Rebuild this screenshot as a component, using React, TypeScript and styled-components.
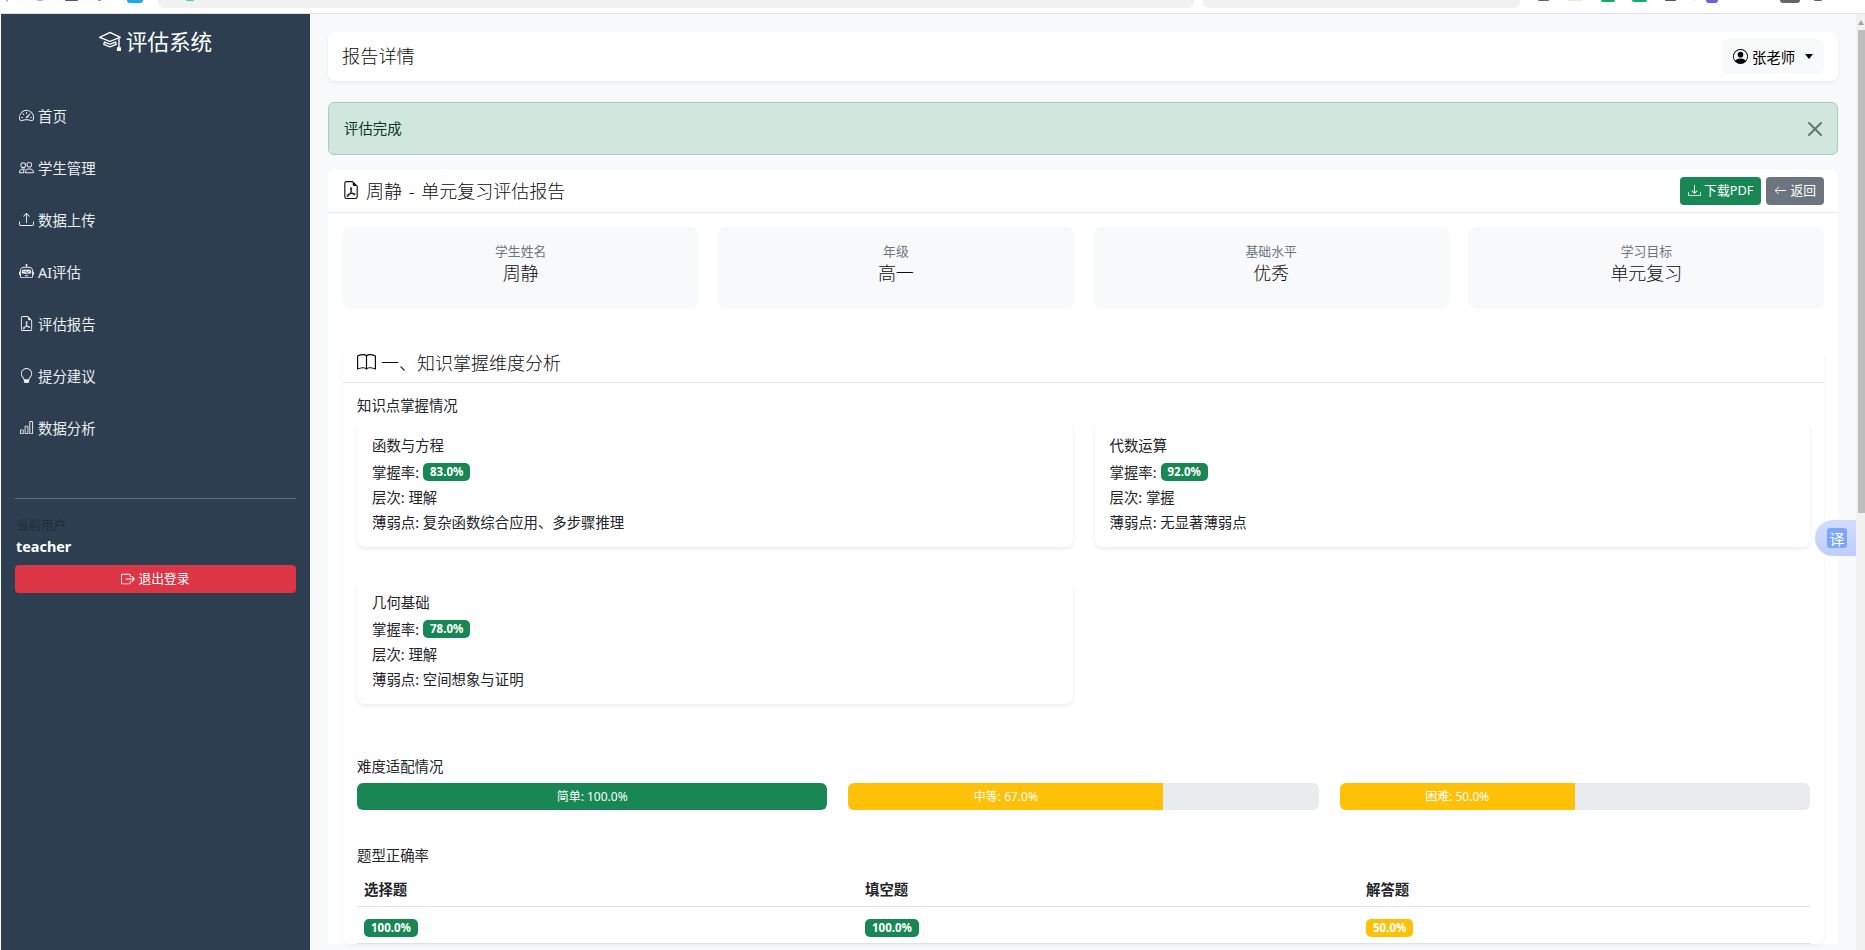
import React from "react";
import styled, { createGlobalStyle } from "styled-components";
import {
  BsArrowLeft,
  BsBarChart,
  BsBook,
  BsBoxArrowRight,
  BsDownload,
  BsFileEarmarkPdf,
  BsLightbulb,
  BsMortarboard,
  BsPeople,
  BsPersonCircle,
  BsRobot,
  BsSpeedometer2,
  BsUpload,
  BsX,
} from "react-icons/bs";

const GlobalStyle = createGlobalStyle`
  html, body {
    margin: 0;
    height: 950px;
    overflow: hidden;
    background: #fff;
    font-family: "Noto Sans", "Noto Sans CJK SC", sans-serif;
    font-size: 14.4px;
    color: #212529;
  }
  * { box-sizing: border-box; }
`;

const navItems = [
  { label: "首页", icon: <BsSpeedometer2 /> },
  { label: "学生管理", icon: <BsPeople /> },
  { label: "数据上传", icon: <BsUpload /> },
  { label: "AI评估", icon: <BsRobot /> },
  { label: "评估报告", icon: <BsFileEarmarkPdf /> },
  { label: "提分建议", icon: <BsLightbulb /> },
  { label: "数据分析", icon: <BsBarChart /> },
];

const infoItems = [
  { label: "学生姓名", value: "周静" },
  { label: "年级", value: "高一" },
  { label: "基础水平", value: "优秀" },
  { label: "学习目标", value: "单元复习" },
];

const knowledge = [
  { name: "函数与方程", rate: "83.0%", level: "理解", weak: "复杂函数综合应用、多步骤推理" },
  { name: "代数运算", rate: "92.0%", level: "掌握", weak: "无显著薄弱点" },
  { name: "几何基础", rate: "78.0%", level: "理解", weak: "空间想象与证明" },
];

const difficulty = [
  { label: "简单: 100.0%", pct: 100, color: "#198754" },
  { label: "中等: 67.0%", pct: 67, color: "#ffc107" },
  { label: "困难: 50.0%", pct: 50, color: "#ffc107" },
];

const questionTypes = [
  { name: "选择题", rate: "100.0%", color: "#198754" },
  { name: "填空题", rate: "100.0%", color: "#198754" },
  { name: "解答题", rate: "50.0%", color: "#ffc107" },
];

const chromeLeft = [
  { ml: 6, w: 2, h: 2, c: "#bdbdbd" },
  { ml: 29, w: 6, h: 1, c: "#b5b5b5" },
  { ml: 22, w: 13, h: 1, c: "#555" },
  { ml: 20, w: 3, h: 1, c: "#888" },
  { ml: 26, w: 16, h: 3, c: "#1ea7f0" },
];

const chromeRight = [
  { ml: 18, w: 11, h: 1, c: "#666" },
  { ml: 19, w: 14, h: 1, c: "#fbe3cd" },
  { ml: 19, w: 14, h: 2, c: "#10b064" },
  { ml: 17, w: 15, h: 2, c: "#10b064" },
  { ml: 18, w: 11, h: 1, c: "#555" },
  { ml: 17, w: 1, h: 1, c: "#ccc" },
  { ml: 12, w: 12, h: 3, c: "#6d5cf0" },
  { ml: 62, w: 20, h: 3, c: "#666" },
  { ml: 14, w: 8, h: 1, c: "#666" },
];

export default function App() {
  return (
    <Page>
      <GlobalStyle />
      <TopStrip>
        {chromeLeft.map((b, i) => (
          <ChromeBit key={i} $ml={b.ml} $w={b.w} $h={b.h} $c={b.c} />
        ))}
        <AddressBar $ml={15} $w={1036}>
          <ChromeBit $ml={28} $w={8} $h={1} $c="#3ddc84" />
        </AddressBar>
        <AddressBar $ml={9} $w={317} />
        {chromeRight.map((b, i) => (
          <ChromeBit key={i} $ml={b.ml} $w={b.w} $h={b.h} $c={b.c} />
        ))}
      </TopStrip>
      <Body>
        <Sidebar>
          <Brand>
            <BsMortarboard />
            评估系统
          </Brand>
          <Nav>
            {navItems.map((item) => (
              <NavItem key={item.label}>
                {item.icon}
                {item.label}
              </NavItem>
            ))}
          </Nav>
          <SideDivider />
          <UserLabel>当前用户</UserLabel>
          <UserName>teacher</UserName>
          <LogoutButton>
            <BsBoxArrowRight />
            <span>退出登录</span>
          </LogoutButton>
        </Sidebar>
        <Main>
          <HeaderCard>
            <PageTitle>报告详情</PageTitle>
            <UserButton>
              <BsPersonCircle />
              张老师
              <Caret />
            </UserButton>
          </HeaderCard>
          <Alert>
            <span>评估完成</span>
            <CloseButton>
              <BsX />
            </CloseButton>
          </Alert>
          <ReportCard>
            <ReportHeader>
              <ReportTitle>
                <BsFileEarmarkPdf />
                周静 - 单元复习评估报告
              </ReportTitle>
              <HeaderActions>
                <ActionButton $bg="#198754">
                  <BsDownload />
                  <span>下载PDF</span>
                </ActionButton>
                <ActionButton $bg="#6c757d">
                  <BsArrowLeft />
                  <span>返回</span>
                </ActionButton>
              </HeaderActions>
            </ReportHeader>
            <ReportBody>
              <InfoGrid>
                {infoItems.map((info) => (
                  <InfoCard key={info.label}>
                    <InfoLabel>{info.label}</InfoLabel>
                    <InfoValue>{info.value}</InfoValue>
                  </InfoCard>
                ))}
              </InfoGrid>
              <Section>
                <SectionHeader>
                  <BsBook />
                  一、知识掌握维度分析
                </SectionHeader>
                <SectionBody>
                  <SubTitle>知识点掌握情况</SubTitle>
                  <KnowledgeGrid>
                    {knowledge.map((k) => (
                      <KnowledgeCard key={k.name}>
                        <KnowledgeRow>{k.name}</KnowledgeRow>
                        <KnowledgeRow>
                          掌握率:<Badge $bg="#198754">{k.rate}</Badge>
                        </KnowledgeRow>
                        <KnowledgeRow>层次: {k.level}</KnowledgeRow>
                        <KnowledgeRow>薄弱点: {k.weak}</KnowledgeRow>
                      </KnowledgeCard>
                    ))}
                  </KnowledgeGrid>
                  <SubTitle>难度适配情况</SubTitle>
                  <ProgressGrid>
                    {difficulty.map((d) => (
                      <Progress key={d.label}>
                        <ProgressFill $bg={d.color} style={{ width: `${d.pct}%` }}>
                          {d.label}
                        </ProgressFill>
                      </Progress>
                    ))}
                  </ProgressGrid>
                  <SubTitle>题型正确率</SubTitle>
                  <RateTable>
                    <thead>
                      <tr>
                        {questionTypes.map((q) => (
                          <RateHead key={q.name}>{q.name}</RateHead>
                        ))}
                      </tr>
                    </thead>
                    <tbody>
                      <tr>
                        {questionTypes.map((q) => (
                          <RateCell key={q.name}>
                            <Badge $bg={q.color}>{q.rate}</Badge>
                          </RateCell>
                        ))}
                      </tr>
                    </tbody>
                  </RateTable>
                </SectionBody>
              </Section>
            </ReportBody>
          </ReportCard>
        </Main>
        <Scrollbar>
          <ScrollArrow />
          <ScrollThumb />
        </Scrollbar>
        <TranslateTab>
          <TranslateIcon>译</TranslateIcon>
        </TranslateTab>
      </Body>
    </Page>
  );
}

const Page = styled.div`
  width: 1865px;
  height: 950px;
  display: flex;
  flex-direction: column;
  overflow: hidden;
`;

const TopStrip = styled.div`
  height: 14px;
  flex: none;
  display: flex;
  align-items: flex-start;
  background: #fff;
  border-bottom: 1px solid #e2e2e2;
`;

const ChromeBit = styled.span<{ $ml: number; $w: number; $h: number; $c: string }>`
  flex: none;
  margin-left: ${(p) => p.$ml}px;
  width: ${(p) => p.$w}px;
  height: ${(p) => p.$h}px;
  background: ${(p) => p.$c};
  border-radius: 0 0 4px 4px;
`;

const AddressBar = styled.div<{ $ml: number; $w: number }>`
  flex: none;
  display: flex;
  margin-left: ${(p) => p.$ml}px;
  width: ${(p) => p.$w}px;
  height: 8px;
  background: #f1f1f1;
  border-radius: 0 0 6px 6px;
`;

const Body = styled.div`
  position: relative;
  flex: 1;
  display: flex;
  min-height: 0;
  padding-left: 1px;
`;

const Sidebar = styled.aside`
  width: 309px;
  flex: none;
  background: #2c3e50;
  padding: 11px 14px 0 14px;
  color: #ecf0f1;
`;

const Brand = styled.div`
  display: flex;
  align-items: center;
  justify-content: center;
  gap: 5px;
  height: 30px;
  font-size: 21.6px;
  color: #fff;

  svg {
    width: 22px;
    height: 22px;
  }
`;

const Nav = styled.nav`
  margin-top: 34px;
  display: flex;
  flex-direction: column;
`;

const NavItem = styled.div`
  height: 52px;
  display: flex;
  align-items: center;
  gap: 4px;
  padding-left: 4px;
  font-size: 14.4px;
  color: #ecf0f1;

  svg {
    width: 15px;
    height: 15px;
  }
`;

const SideDivider = styled.div`
  margin-top: 45px;
  height: 1px;
  background: #5c6a79;
`;

const UserLabel = styled.div`
  margin-top: 18px;
  padding-left: 1px;
  font-size: 12.5px;
  line-height: 18px;
  color: #232d38;
`;

const UserName = styled.div`
  margin-top: 2px;
  padding-left: 1px;
  font-size: 14.4px;
  line-height: 20px;
  font-weight: 700;
  color: #fff;
`;

const LogoutButton = styled.button`
  margin-top: 8px;
  width: 100%;
  height: 28px;
  border: 0;
  border-radius: 4px;
  background: #dc3545;
  color: #fff;
  font: inherit;
  font-size: 12.8px;
  display: flex;
  align-items: center;
  justify-content: center;
  gap: 3px;

  span {
    padding-bottom: 3px;
  }

  svg {
    width: 14px;
    height: 14px;
  }
`;

const Main = styled.main`
  flex: 1;
  min-width: 0;
  background: #f8f9fa;
  padding: 18px 18px 0;
  overflow: hidden;
`;

const HeaderCard = styled.div`
  height: 49px;
  display: flex;
  align-items: center;
  justify-content: space-between;
  padding: 0 14px;
  background: #fff;
  border-radius: 8px;
  box-shadow: 0 2px 4px rgba(0, 0, 0, 0.05);
`;

const PageTitle = styled.div`
  padding-bottom: 3px;
  font-size: 18.2px;
  font-weight: 300;
  color: #0b0d0e;
`;

const UserButton = styled.div`
  width: 102px;
  height: 35px;
  display: flex;
  align-items: center;
  gap: 4px;
  padding-left: 11px;
  background: #f8f9fa;
  border-radius: 6px;
  font-size: 14.4px;
  color: #000;

  svg {
    width: 15px;
    height: 15px;
  }
`;

const Caret = styled.span`
  margin-left: 6px;
  width: 0;
  height: 0;
  border-top: 5px solid #000;
  border-left: 4.5px solid transparent;
  border-right: 4.5px solid transparent;
`;

const Alert = styled.div`
  margin-top: 21px;
  height: 53px;
  display: flex;
  align-items: center;
  justify-content: space-between;
  padding: 0 6px 0 15px;
  background: #d1e7dd;
  border: 1px solid #a3cfbb;
  border-radius: 6px;
  font-size: 14.4px;
  color: #0a3622;

  span {
    padding-bottom: 2px;
  }
`;

const CloseButton = styled.div`
  display: flex;
  color: #66766f;

  svg {
    width: 32px;
    height: 32px;
  }
`;

const ReportCard = styled.div`
  margin-top: 14px;
  background: #fff;
  border-radius: 8px 8px 0 0;
`;

const ReportHeader = styled.div`
  height: 44px;
  display: flex;
  align-items: center;
  justify-content: space-between;
  padding: 0 14px;
  border-bottom: 1px solid #e9ecef;
`;

const ReportTitle = styled.div`
  display: flex;
  align-items: center;
  gap: 6px;
  padding-bottom: 2px;
  font-size: 18px;
  font-weight: 300;
  color: #0b0d0e;
  word-spacing: 2px;

  svg {
    width: 18px;
    height: 18px;
  }
`;

const HeaderActions = styled.div`
  display: flex;
  gap: 5px;
`;

const ActionButton = styled.button<{ $bg: string }>`
  height: 28px;
  padding: 0 8px;
  border: 0;
  border-radius: 4px;
  background: ${(p) => p.$bg};
  color: #fff;
  font: inherit;
  font-size: 12.8px;
  display: flex;
  align-items: center;
  gap: 3px;

  span {
    padding-bottom: 2px;
  }

  svg {
    width: 13px;
    height: 13px;
  }
`;

const ReportBody = styled.div`
  padding: 14px 14px 0 15px;
`;

const InfoGrid = styled.div`
  display: grid;
  grid-template-columns: repeat(4, 1fr);
  gap: 20px;
`;

const InfoCard = styled.div`
  height: 79px;
  padding-top: 15px;
  text-align: center;
  background: #f8f9fa;
  border-radius: 8px;
  box-shadow: 0 2px 3px rgba(0, 0, 0, 0.04);
`;

const InfoLabel = styled.div`
  font-size: 12.8px;
  line-height: 19px;
  color: #6c757d;
`;

const InfoValue = styled.div`
  font-size: 18px;
  font-weight: 300;
  line-height: 24px;
  color: #0b0d0e;
`;

const Section = styled.section`
  margin-top: 42px;
  background: #fff;
  border-radius: 8px;
  box-shadow: 0 2px 4px rgba(0, 0, 0, 0.05);
`;

const SectionHeader = styled.div`
  height: 35px;
  display: flex;
  align-items: center;
  gap: 5px;
  padding: 0 0 6px 14px;
  font-size: 18px;
  font-weight: 300;
  color: #0b0d0e;
  border-bottom: 1px solid #e9ecef;

  svg {
    width: 19px;
    height: 19px;
  }
`;

const SectionBody = styled.div`
  padding: 13px 14px 0 14px;
`;

const SubTitle = styled.div`
  font-size: 14.4px;
  line-height: 20px;
`;

const KnowledgeGrid = styled.div`
  margin-top: 6px;
  margin-bottom: 53px;
  display: grid;
  grid-template-columns: 1fr 1fr;
  column-gap: 22px;
  row-gap: 32px;
`;

const KnowledgeCard = styled.div`
  padding: 10px 15px 13px;
  background: #fff;
  border-radius: 8px;
  box-shadow: 0 2px 4px rgba(0, 0, 0, 0.08);
`;

const KnowledgeRow = styled.div`
  height: 25px;
  display: flex;
  align-items: center;
  gap: 4px;
  font-size: 14.4px;
  white-space: pre;

  &:nth-child(2) {
    margin-top: 2px;
  }
`;

const Badge = styled.span<{ $bg: string }>`
  display: inline-block;
  padding: 0 7px;
  height: 18px;
  line-height: 18px;
  border-radius: 5px;
  background: ${(p) => p.$bg};
  color: #fff;
  font-size: 11.5px;
  font-weight: 700;
`;

const ProgressGrid = styled.div`
  margin-top: 6px;
  margin-bottom: 36px;
  display: grid;
  grid-template-columns: repeat(3, 1fr);
  gap: 21px;
`;

const Progress = styled.div`
  height: 27px;
  display: flex;
  background: #e9ecef;
  border-radius: 6px;
  overflow: hidden;
`;

const ProgressFill = styled.div<{ $bg: string }>`
  display: flex;
  align-items: center;
  justify-content: center;
  padding-bottom: 2px;
  background: ${(p) => p.$bg};
  color: #fff;
  font-size: 12px;
`;

const RateTable = styled.table`
  margin-top: 6px;
  width: 100%;
  table-layout: fixed;
  border-collapse: collapse;
`;

const RateHead = styled.th`
  height: 34px;
  padding: 0 7px;
  text-align: left;
  font-size: 14.4px;
  font-weight: 700;
  border-bottom: 1px solid #dee2e6;

  &:nth-child(-n + 2) {
    width: 501px;
  }
`;

const RateCell = styled.td`
  height: 37px;
  padding: 4px 7px 0;
  border-bottom: 1px solid #dee2e6;
`;

const Scrollbar = styled.div`
  width: 9px;
  flex: none;
  display: flex;
  flex-direction: column;
  align-items: flex-end;
  background: #f1f1f1;
`;

const ScrollArrow = styled.div`
  margin: 6px 1px 5px 0;
  width: 0;
  height: 0;
  border-bottom: 5px solid #a3a3a3;
  border-left: 3px solid transparent;
  border-right: 3px solid transparent;
`;

const ScrollThumb = styled.div`
  width: 7px;
  height: 483px;
  background: #bdbdbd;
`;

const TranslateTab = styled.div`
  position: absolute;
  top: 506px;
  right: 9px;
  width: 41px;
  height: 36px;
  display: flex;
  align-items: center;
  padding-left: 12px;
  background: linear-gradient(180deg, #d2dcff, #bccdff);
  border-radius: 18px 0 0 18px;
`;

const TranslateIcon = styled.div`
  width: 20px;
  height: 20px;
  display: flex;
  align-items: center;
  justify-content: center;
  background: #7ea6f8;
  border-radius: 3px;
  color: #fff;
  font-size: 15px;
`;
